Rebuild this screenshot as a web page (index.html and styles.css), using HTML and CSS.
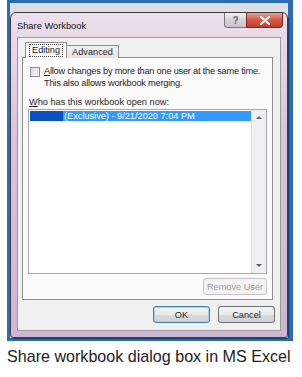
FILE: index.html
```html
<!DOCTYPE html>
<html lang="en">
<head>
    <meta charset="UTF-8">
    <meta name="viewport" content="width=device-width, initial-scale=1.0">
    <title>Share Workbook</title>
    <link rel="stylesheet" href="styles.css">
</head>
<body>
<div class="shot">
    <div class="window">
        <div class="titlebar">
            <span class="title">Share Workbook</span>
            <div class="caption-buttons">
                <span class="btn-help">?</span>
                <span class="btn-close">
                    <svg width="12" height="9" viewBox="0 0 12 9"><path d="M2 1 L10 8 M10 1 L2 8" stroke="#fff" stroke-width="2.2" stroke-linecap="round"/></svg>
                </span>
            </div>
        </div>
        <div class="client">
            <div class="tabs">
                <div class="tab active"><span class="focus">Editing</span></div>
                <div class="tab">Advanced</div>
            </div>
            <div class="panel">
                <div class="check-row">
                    <span class="checkbox"></span>
                    <span class="check-text"><u>A</u>llow changes by more than one user at the same time.<br>This also allows workbook merging.</span>
                </div>
                <div class="list-label"><u>W</u>ho has this workbook open now:</div>
                <div class="listbox">
                    <div class="rows">
                        <div class="row selected"><span class="user"></span>(Exclusive) - 9/21/2020 7:04 PM</div>
                    </div>
                    <div class="scrollbar">
                        <span class="arrow up"></span>
                        <span class="arrow down"></span>
                    </div>
                </div>
                <div class="panel-actions">
                    <button class="button disabled">Remove User</button>
                </div>
            </div>
            <div class="dialog-actions">
                <button class="button default">OK</button>
                <button class="button">Cancel</button>
            </div>
        </div>
    </div>
</div>
<p class="caption">Share workbook dialog box in MS Excel</p>
</body>
</html>
```

FILE: styles.css
```css
body {
    margin: 0;
    padding: 0;
    background-color: #fff;
    font-family: 'Liberation Sans', Arial, sans-serif;
    color: #1e1e1e;
}

.shot {
    margin-left: 7px;
    width: 286px;
    height: 341px;
    box-sizing: border-box;
    border: 3px solid #2b6cb5;
    border-right-width: 5px;
    background-color: #dcdfe4;
    padding-top: 9px;
}

.window {
    width: 278px;
    height: 326px;
    box-sizing: border-box;
    border: 1px solid #3e3e42;
    border-radius: 6px 6px 3px 3px;
    background: linear-gradient(180deg, #ece0ec 0%, #dac6da 35%, #ceb7d0 100%);
    box-shadow: 1px 1px 1px rgba(0, 0, 0, 0.45);
    display: flex;
    flex-direction: column;
}

.titlebar {
    height: 24px;
    display: flex;
    justify-content: space-between;
    align-items: flex-start;
}

.title {
    font-size: 9.3px;
    margin: 8px 0 0 6px;
    color: #111;
}

.caption-buttons {
    display: flex;
    margin-right: 4px;
}

.btn-help,
.btn-close {
    height: 15px;
    box-sizing: border-box;
    border: 1px solid #7d7480;
    border-top: none;
    display: flex;
    align-items: center;
    justify-content: center;
}

.btn-help {
    width: 22px;
    border-radius: 0 0 0 4px;
    border-right: none;
    background: linear-gradient(180deg, #f2eef2 0%, #d9d2da 50%, #c9c0cb 100%);
    color: #666;
    font-size: 10px;
    font-weight: bold;
}

.btn-close {
    width: 37px;
    border-radius: 0 0 4px 0;
    background: linear-gradient(180deg, #e8a193 0%, #d6594a 50%, #c23c2c 100%);
    border-color: #7a2a22;
}

.client {
    flex: 1;
    margin: 0 6px 6px 6px;
    background-color: #f0f0f0;
    border: 1px solid #9b98a0;
    display: flex;
    flex-direction: column;
    font-size: 9.2px;
}

.tabs {
    display: flex;
    align-items: flex-end;
    margin: 4px 0 0 7px;
    height: 16px;
    position: relative;
    z-index: 1;
}

.tab {
    height: 13px;
    box-sizing: border-box;
    padding: 0 5px;
    border: 1px solid #8d8f91;
    border-bottom: none;
    background: linear-gradient(180deg, #f3f3f3 0%, #e3e3e3 100%);
    display: flex;
    align-items: center;
    margin-left: -1px;
}

.tab.active {
    height: 16px;
    background: #fbfbfb;
    padding: 0 3px;
    margin-left: 0;
}

.focus {
    border: 1px dotted #444;
    padding: 0 2px;
    line-height: 11px;
}

.panel {
    height: 243px;
    margin: -1px 7px 0 4px;
    box-sizing: border-box;
    border: 1px solid #8d8f91;
    background-color: #fbfbfb;
    display: flex;
    flex-direction: column;
    padding: 0 5px 0 5px;
}

.check-row {
    display: flex;
    gap: 4px;
    margin: 8px 0 0 2px;
}

.checkbox {
    width: 8px;
    height: 8px;
    margin-top: 1px;
    border: 1px solid #8f8f8f;
    background: linear-gradient(135deg, #dcdcdc 0%, #f6f6f6 100%);
    flex: 0 0 auto;
}

.check-text {
    line-height: 11.5px;
    letter-spacing: -0.2px;
    white-space: nowrap;
}

.list-label {
    margin: 8px 0 0 1px;
    line-height: 11px;
}

.listbox {
    height: 165px;
    margin-top: 1px;
    border: 1px solid #a5a8ad;
    background-color: #fff;
    box-sizing: border-box;
    display: flex;
}

.rows {
    flex: 1;
    padding: 1px 0 0 1px;
}

.row {
    height: 10px;
    line-height: 10px;
    display: flex;
    color: #fff;
}

.row.selected {
    background-color: #3399ff;
}

.user {
    width: 33px;
    margin-right: 1px;
    background-color: #0a52c4;
}

.scrollbar {
    width: 14px;
    border-left: 1px solid #e2e2e2;
    background-color: #f0f0f0;
    display: flex;
    flex-direction: column;
    justify-content: space-between;
    align-items: center;
    padding: 6px 0;
}

.arrow {
    width: 0;
    height: 0;
    border-left: 3px solid transparent;
    border-right: 3px solid transparent;
}

.arrow.up {
    border-bottom: 3px solid #606060;
}

.arrow.down {
    border-top: 3px solid #606060;
}

.panel-actions {
    display: flex;
    justify-content: flex-end;
    margin-top: 4px;
}

.button {
    width: 57px;
    height: 17px;
    box-sizing: border-box;
    font-family: 'Liberation Sans', Arial, sans-serif;
    font-size: 9.2px;
    color: #1e1e1e;
    border: 1px solid #707070;
    border-radius: 3px;
    background: linear-gradient(180deg, #f3f3f3 0%, #ebebeb 50%, #dddddd 51%, #cfcfcf 100%);
    padding: 0;
}

.button.disabled {
    width: 64px;
    color: #a0a0a0;
    border-color: #c4c4c4;
    background: #f4f4f4;
}

.button.default {
    border-color: #3c7fb1;
    box-shadow: inset 0 0 0 1px #9fd6f3;
}

.dialog-actions {
    display: flex;
    justify-content: flex-end;
    gap: 8px;
    margin: 6px 5px 0 0;
}

.caption {
    margin: 6px 0 0 7px;
    font-size: 16.1px;
    color: #222;
}
```
